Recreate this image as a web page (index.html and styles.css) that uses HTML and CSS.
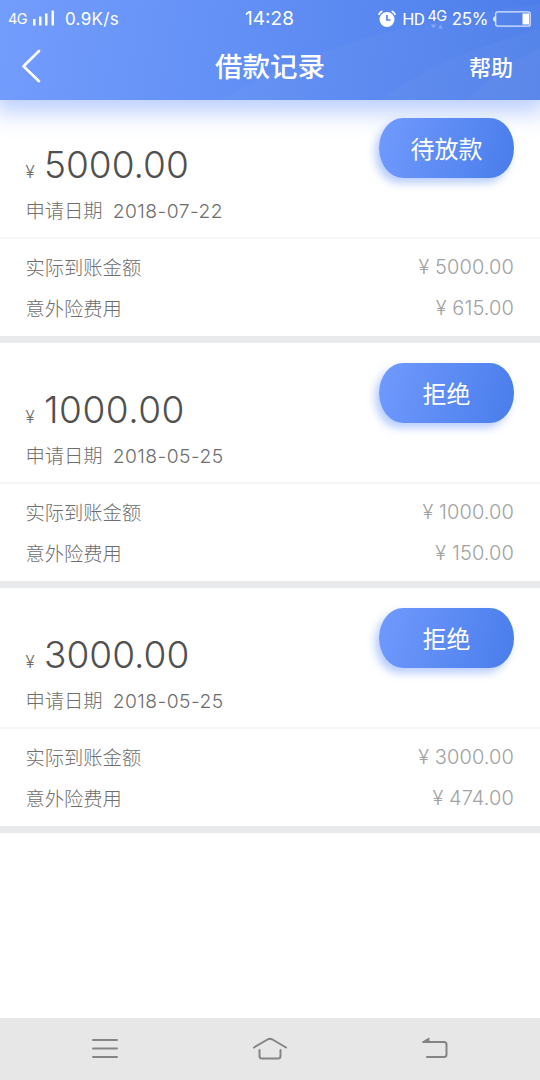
FILE: index.html
```html
<!DOCTYPE html>
<html lang="zh-CN">
<head>
<meta charset="utf-8">
<title>借款记录</title>
<link rel="stylesheet" href="styles.css">
</head>
<body>
<div class="screen">
  <header class="header">
    <svg class="waves" viewBox="0 0 540 100" aria-hidden="true">
      <path class="wave" d="M220 100C310 48 410 20 540 4V100Z"/>
      <path class="wave" d="M380 100C425 68 480 43 540 30V100Z"/>
      <path class="wave" d="M468 100C490 76 515 59 540 49V100Z"/>
    </svg>
    <div class="status">
      <div class="status-left">
        <span class="net">4G</span>
        <svg class="signal" width="22" height="16" viewBox="0 0 22 16"><path d="M0 9h2.500v6.500H0zM6 6.500h2.500v9H6zM12 3.500h2.500v12H12zM18.500 .5H21v15h-2.500z"/></svg>
        <span class="speed">0.9K/s</span>
      </div>
      <span class="time">14:28</span>
      <div class="status-right">
        <svg class="alarm" width="18" height="18" viewBox="0 0 18 18"><circle cx="9" cy="9.500" r="7.500" fill="#fff"/><path d="M9 5V10H12.500" fill="none" stroke="#5584ee" stroke-width="1.700"/><path d="M.8 5Q1.500 2 4.500 1.200M17.200 5Q16.500 2 13.500 1.200" fill="none" stroke="#fff" stroke-width="1.500"/></svg>
        <span class="hd">HD</span>
        <span class="data"><span class="data-net">4G</span><svg width="12" height="5" viewBox="0 0 12 5"><path d="M0 .5h5L2.500 4.500zM7 4.500h5L9.500 .5z" fill="#86a7f4"/></svg></span>
        <span class="percent">25%</span>
        <svg class="battery" width="38" height="16" viewBox="0 0 38 16"><path d="M2 5.200Q0 5.500 0 8t2 2.800z" fill="#dce6ff"/><rect x="2.700" y=".8" width="34.500" height="14.400" rx="2" fill="none" stroke="#dce6ff" stroke-width="1.300"/><rect x="29.500" y="2.500" width="6.500" height="11" fill="#fff"/></svg>
      </div>
    </div>
    <nav class="titlebar">
      <svg class="back" width="20" height="34" viewBox="0 0 20 34"><path d="M18 2L2.500 17.200l15.500 15" fill="none" stroke="#fff" stroke-width="2.600" stroke-linecap="round" stroke-linejoin="round"/></svg>
      <h1 class="title">借款记录</h1>
      <span class="help">帮助</span>
    </nav>
  </header>

  <main class="records">
    <section class="record">
      <div class="summary">
        <div class="loan">
          <div class="amount"><span class="yen">¥</span><span class="figure">5000.00</span></div>
          <div class="date"><span>申请日期</span><span class="day">2018-07-22</span></div>
        </div>
        <span class="badge">待放款</span>
      </div>
      <div class="details">
        <div class="row"><span>实际到账金额</span><span class="value">¥ 5000.00</span></div>
        <div class="row"><span>意外险费用</span><span class="value">¥ 615.00</span></div>
      </div>
    </section>
    <section class="record">
      <div class="summary">
        <div class="loan">
          <div class="amount"><span class="yen">¥</span><span class="figure figure-wide">1000.00</span></div>
          <div class="date"><span>申请日期</span><span class="day">2018-05-25</span></div>
        </div>
        <span class="badge">拒绝</span>
      </div>
      <div class="details">
        <div class="row"><span>实际到账金额</span><span class="value">¥ 1000.00</span></div>
        <div class="row"><span>意外险费用</span><span class="value">¥ 150.00</span></div>
      </div>
    </section>
    <section class="record">
      <div class="summary">
        <div class="loan">
          <div class="amount"><span class="yen">¥</span><span class="figure">3000.00</span></div>
          <div class="date"><span>申请日期</span><span class="day">2018-05-25</span></div>
        </div>
        <span class="badge">拒绝</span>
      </div>
      <div class="details">
        <div class="row"><span>实际到账金额</span><span class="value">¥ 3000.00</span></div>
        <div class="row"><span>意外险费用</span><span class="value">¥ 474.00</span></div>
      </div>
    </section>
  </main>

  <footer class="navbar">
    <svg width="26" height="24" viewBox="0 0 26 24"><path d="M1 3h24M1 11.500h24M1 20h24"/></svg>
    <svg width="36" height="24" viewBox="0 0 36 24"><path d="M2 10.500L15.500 2.500Q18 .8 20.500 2.500L34 10.500M7.500 13v6q0 2.500 2.500 2.500h16q2.500 0 2.500-2.500v-6"/></svg>
    <svg width="26" height="24" viewBox="0 0 26 24"><path d="M2 5h20q2.500 0 2.500 2.500v10q0 2.500-2.500 2.500H5"/><path class="tip" d="M.5 5l6.500-4V5z"/></svg>
  </footer>
</div>
</body>
</html>
```

FILE: styles.css
```css
* { box-sizing: border-box; }
body {
  margin: 0;
  font-family: Inter, "Noto Sans CJK SC", sans-serif;
  font-weight: 300;
}
svg { display: block; flex: none; }
.screen {
  width: 540px;
  height: 1080px;
  display: flex;
  flex-direction: column;
  background: #fff;
  overflow: hidden;
}
.header {
  position: relative;
  z-index: 1;
  height: 100.4px;
  flex: none;
  color: #fff;
  background: linear-gradient(100deg, #739dfd 0%, #6491f6 40%, #4b7de9 100%);
  box-shadow: 0 6px 22px 6px rgba(91, 138, 248, .42);
}
.waves { position: absolute; inset: 0; }
.wave { fill: rgba(255, 255, 255, .03); }
.status {
  position: relative;
  height: 37px;
  display: grid;
  grid-template-columns: 1fr auto 1fr;
  align-items: center;
  padding: 0 9px 0 8px;
  font-weight: 400;
}
.status-left, .status-right { display: flex; align-items: center; }
.net { font-size: 14.5px; letter-spacing: -.5px; width: 25px; }
.signal { fill: #fff; margin-top: -1px; }
.speed { font-size: 17px; letter-spacing: .3px; margin-left: 10px; }
.time { font-size: 19px; }
.status-right { justify-content: flex-end; }
.hd { font-family: Roboto, sans-serif; font-size: 17px; letter-spacing: -.6px; margin-left: 6px; }
.data { display: flex; flex-direction: column; align-items: center; margin: -1px 0 0 3px; }
.data-net { font-size: 14.5px; line-height: 16px; letter-spacing: -.4px; }
.percent { font-size: 17px; letter-spacing: -.4px; margin: 0 5px 0 5px; }
.titlebar {
  position: relative;
  height: 58px;
  display: grid;
  grid-template-columns: 1fr auto 1fr;
  align-items: center;
  padding: 0 27px 0 21px;
}
.title { margin: 2px 0 0 6px; font-size: 27.5px; line-height: 40px; font-weight: 500; }
.help { justify-self: end; margin-top: -1px; font-size: 22px; font-weight: 500; }
.records { flex: 1; margin-top: -2.9px; }
.record { height: 245px; border-bottom: 7px solid #e9eaec; }
.summary {
  height: 141.5px;
  display: flex;
  justify-content: space-between;
  padding: 20px 26px 0 25.5px;
  border-bottom: 2px solid #f5f5f6;
  color: #6e6e6e;
}
.loan { padding-top: 25px; }
.amount { display: flex; align-items: baseline; height: 44px; line-height: 44px; }
.yen {
  width: 18.5px;
  font-size: 17px;
}
.figure { font-size: 37px; color: #505050; }
.figure-wide { letter-spacing: .5px; }
.date {
  display: flex;
  gap: 10px;
  align-items: baseline;
  height: 28px;
  margin-top: 10px;
  font-size: 19.3px;
  line-height: 28px;
}
.day { letter-spacing: .45px; }
.badge {
  position: relative;
  z-index: 2;
  width: 135px;
  height: 60px;
  border-radius: 24px / 30px;
  background: linear-gradient(105deg, #719afd, #497deb);
  box-shadow: -4px 5px 9px rgba(86, 135, 250, .42);
  color: #fff;
  font-size: 24px;
  font-weight: 400;
  line-height: 64px;
  text-align: center;
}
.details { padding: 7.5px 26px 0 25.5px; }
.row {
  height: 41px;
  display: flex;
  justify-content: space-between;
  align-items: center;
  font-size: 19.3px;
  color: #6e6e6e;
}
.value { color: #a2a2a2; font-size: 20px; letter-spacing: .1px; }
.navbar {
  height: 62.5px;
  flex: none;
  display: flex;
  justify-content: space-between;
  align-items: center;
  padding: 0 92px;
  background: #e7e7e7;
}
.navbar path { fill: none; stroke: #858585; stroke-width: 2; stroke-linecap: round; }
.navbar .tip { fill: #858585; stroke-width: 1; }
```
